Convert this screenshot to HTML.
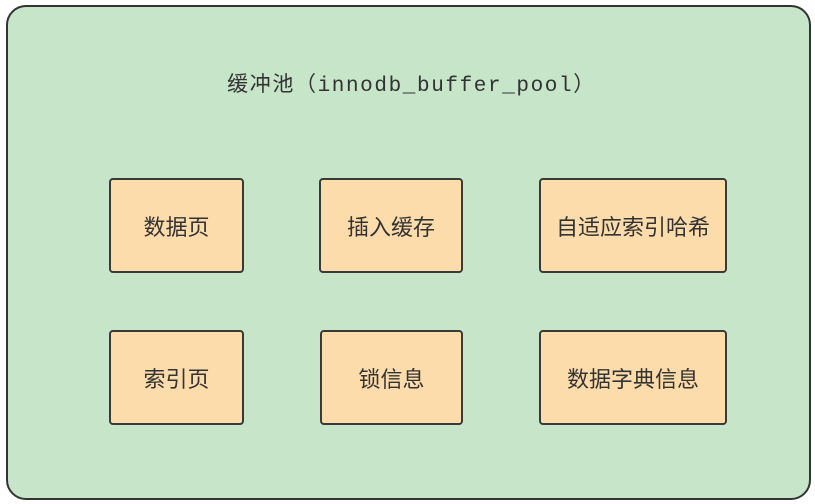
<!DOCTYPE html>
<html><head><meta charset="utf-8"><style>
body{margin:0;width:815px;height:504px;background:#fff;position:relative;overflow:hidden;font-family:"Liberation Sans","Noto Sans CJK SC",sans-serif;}
.outer{position:absolute;left:6px;top:5px;width:801px;height:491px;border:2px solid #333;border-radius:20px;background:#c7e5c9;box-sizing:content-box;}
.t{position:absolute;left:4px;top:68px;width:815px;text-align:center;font-size:21px;color:#333;letter-spacing:1.6px;}
.b{position:absolute;border:2px solid #3a3a3a;border-radius:4px;background:#fddcab;display:flex;align-items:center;justify-content:center;font-size:22px;color:#333;box-sizing:border-box;}
</style></head><body>
<div class="outer"></div>
<div class="t">缓冲池（<span style="font-family:'Liberation Mono','Noto Sans CJK SC',monospace">innodb_buffer_pool</span>）</div>
<div class="b" style="left:109px;top:178px;width:135px;height:95px">数据页</div>
<div class="b" style="left:319px;top:178px;width:144px;height:95px">插入缓存</div>
<div class="b" style="left:539px;top:178px;width:188px;height:95px">自适应索引哈希</div>
<div class="b" style="left:109px;top:330px;width:135px;height:95px">索引页</div>
<div class="b" style="left:320px;top:330px;width:143px;height:95px">锁信息</div>
<div class="b" style="left:539px;top:330px;width:188px;height:95px">数据字典信息</div>
</body></html>
